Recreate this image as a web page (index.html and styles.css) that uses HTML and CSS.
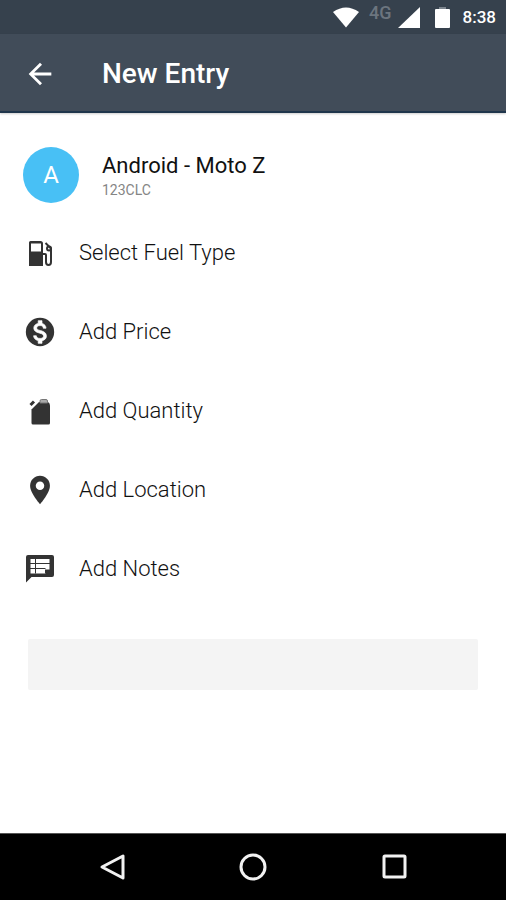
FILE: index.html
```html
<!DOCTYPE html>
<html lang="en">
<head>
<meta charset="utf-8">
<meta name="viewport" content="width=device-width, initial-scale=1">
<title>New Entry</title>
<link rel="stylesheet" href="styles.css">
</head>
<body>
<div class="status-bar">
  <svg class="status-icon wifi" viewBox="0 0 26 21" aria-hidden="true"><path d="M0 5Q13-4 26 5L13 20.500z"/></svg>
  <span class="network">4G</span>
  <svg class="status-icon signal" viewBox="0 0 22 21" aria-hidden="true"><path d="M22 0v21H0z"/></svg>
  <svg class="status-icon battery" viewBox="0 0 15 21" aria-hidden="true"><path class="battery-cap" d="M4 0h7v3H4z"/><path d="M1 2h13q1 0 1 1v17q0 1-1 1H1q-1 0-1-1V3q0-1 1-1z"/></svg>
  <time class="clock">8:38</time>
</div>
<header class="app-bar">
  <button class="icon-button" type="button" aria-label="Back">
    <svg class="icon" viewBox="0 0 24 24" aria-hidden="true"><path d="M20 11H7.830l5.590-5.590L12 4l-8 8 8 8 1.410-1.410L7.830 13H20z"/></svg>
  </button>
  <h1 class="title">New Entry</h1>
</header>
<main class="content">
  <section class="vehicle">
    <span class="avatar" aria-hidden="true">A</span>
    <div class="vehicle-text">
      <p class="vehicle-name">Android - Moto Z</p>
      <p class="vehicle-plate">123CLC</p>
    </div>
  </section>
  <ul class="fields">
    <li><button class="field" type="button">
      <svg class="icon" viewBox="0 0 34 34" aria-hidden="true"><path fill-rule="evenodd" d="M7.500 5h10Q20 5 20 7.500V30H6V6.500Q6 5 7.500 5zM8 7.500V15.500h10V7.500z"/><path class="stroke" d="M20 18h2q1 0 1 1v7q0 3 2.500 3t2.500-3V12.500L22.500 7"/><circle class="stroke" cx="26" cy="12.500" r="2"/></svg>
      Select Fuel Type</button></li>
    <li><button class="field" type="button">
      <svg class="icon" viewBox="0 0 24 24" aria-hidden="true"><circle cx="12" cy="12" r="10"/><path class="dollar" d="M13.410 18.090V20h-2.670v-1.930c-1.710-.36-3.160-1.460-3.270-3.400h1.960c.1 1.050.82 1.870 2.650 1.870 1.960 0 2.400-.98 2.400-1.590 0-.83-.44-1.610-2.670-2.140-2.480-.6-4.180-1.620-4.180-3.670 0-1.720 1.390-2.840 3.110-3.210V4h2.670v1.950c1.860.45 2.790 1.860 2.850 3.390H14.300c-.05-1.110-.64-1.870-2.220-1.870-1.500 0-2.400.68-2.400 1.640 0 .84.65 1.390 2.670 1.910s4.180 1.390 4.180 3.910c-.02 1.830-1.380 2.830-3.120 3.160z"/></svg>
      Add Price</button></li>
    <li><button class="field" type="button">
      <svg class="icon" viewBox="0 0 34 34" aria-hidden="true"><path d="M8.500 15.500 16 8h9Q27 9 27 11.500v17.500q0 1.500-1.500 1.500h-15.500Q8.500 30.500 8.500 29z"/><path class="stroke thick" d="M7.500 11l3.500-3.500"/><path class="handle" d="M17 9V7q0-1.500 1.500-1.500H23q1.500 0 1.500 1.500v2z"/></svg>
      Add Quantity</button></li>
    <li><button class="field" type="button">
      <svg class="icon" viewBox="0 0 24 24" aria-hidden="true"><path d="M12 2C8.130 2 5 5.130 5 9c0 5.250 7 13 7 13s7-7.750 7-13c0-3.870-3.130-7-7-7z"/><circle class="paper" cx="12" cy="9" r="3"/></svg>
      Add Location</button></li>
    <li><button class="field" type="button">
      <svg class="icon" viewBox="0 0 34 34" aria-hidden="true"><path d="M5 3h24q2 0 2 2v18q0 2-2 2H8.500L3 30.500V5q0-2 2-2z"/><path class="paper" d="M7.500 7h19v10.500l-4 4h-15z"/><path class="rule" d="M7 11.500h20M7 16.500h15.500M12.500 7v14.500"/><path d="M22 21.500v-4h5v4z"/></svg>
      Add Notes</button></li>
  </ul>
  <button class="save" type="submit" aria-label="Save" disabled></button>
</main>
<nav class="nav-bar" aria-label="System">
  <button class="nav-button" type="button" aria-label="Back"><svg class="nav-icon" viewBox="0 0 28 28" aria-hidden="true"><path d="M26 3v22L5 14z"/></svg></button>
  <button class="nav-button" type="button" aria-label="Home"><svg class="nav-icon" viewBox="0 0 28 28" aria-hidden="true"><circle cx="14" cy="14" r="12"/></svg></button>
  <button class="nav-button" type="button" aria-label="Recent apps"><svg class="nav-icon" viewBox="0 0 28 28" aria-hidden="true"><rect x="3" y="3" width="21" height="21" rx="1"/></svg></button>
</nav>
</body>
</html>
```
FILE: styles.css
```css
* {
  box-sizing: border-box;
}

body {
  display: flex;
  flex-direction: column;
  min-height: 100vh;
  margin: 0;
  background: #fff;
  color: #333;
  font-family: Roboto, "Liberation Sans", sans-serif;
}

h1,
p,
ul {
  margin: 0;
  padding: 0;
}

ul {
  list-style: none;
}

button {
  padding: 0;
  border: 0;
  background: none;
  color: inherit;
  font: inherit;
}

svg {
  display: block;
  flex: none;
  fill: currentColor;
}

.status-bar {
  display: flex;
  align-items: center;
  justify-content: flex-end;
  height: 34px;
  padding: 0 10px;
  background: #36414d;
  color: #fff;
}

.status-icon {
  height: 21px;
}

.wifi {
  width: 26px;
}

.network {
  align-self: flex-start;
  margin: 2px 6px 0 10px;
  color: #6c757f;
  font-size: 18px;
  font-weight: 500;
  line-height: 22px;
}

.signal {
  width: 22px;
}

.battery {
  width: 15px;
  margin: 0 13px 0 15px;
}

.battery-cap {
  fill: #7d858e;
}

.clock {
  font-size: 17px;
  font-weight: 500;
  line-height: 22px;
}

.app-bar {
  display: flex;
  align-items: center;
  gap: 45px;
  height: 79px;
  padding: 3px 23px 0;
  border-bottom: 2px solid #20364c;
  background: #414c59;
  color: #fff;
  box-shadow: 0 1px 2px rgba(0, 0, 0, 0.2);
}

.icon {
  width: 34px;
  height: 34px;
}

.title {
  font-size: 28px;
  font-weight: 500;
  line-height: 36px;
}

.content {
  flex: 1;
  padding: 34px 0;
}

.vehicle {
  display: flex;
  align-items: center;
  gap: 23px;
  padding: 0 23px;
}

.avatar {
  display: flex;
  flex: none;
  align-items: center;
  justify-content: center;
  width: 56px;
  height: 56px;
  border-radius: 50%;
  background: #48c0f5;
  color: #fff;
  font-size: 24px;
}

.vehicle-text {
  padding-top: 2px;
}

.vehicle-name {
  color: #111;
  font-size: 22px;
  line-height: 28px;
}

.vehicle-plate {
  color: #858585;
  font-size: 14px;
  line-height: 20px;
}

.fields {
  padding-top: 10px;
}

.field {
  display: flex;
  align-items: center;
  gap: 22px;
  width: 100%;
  height: 79px;
  padding: 0 23px;
  color: #111;
  font-size: 22px;
  font-weight: 300;
  line-height: 28px;
  text-align: left;
}

.field .icon {
  color: #333;
}

.stroke {
  fill: none;
  stroke: currentColor;
  stroke-width: 2;
}

.thick {
  stroke-width: 3;
}

.handle {
  fill: #aaa;
  stroke: #777;
}

.paper {
  fill: #fff;
}

.dollar {
  fill: #fff;
  stroke: #fff;
  stroke-width: 0.5;
}

.rule {
  fill: none;
  stroke: currentColor;
  stroke-width: 1;
}

.save {
  display: block;
  width: calc(100% - 56px);
  height: 51px;
  margin: 31px auto 0;
  border-radius: 2px;
  background: #f4f4f4;
}

.nav-bar {
  display: flex;
  justify-content: center;
  height: 67px;
  border-top: 1px solid #555;
  background: #000;
  color: #f2f2f2;
}

.nav-button {
  display: flex;
  flex: 0 1 28%;
  align-items: center;
  justify-content: center;
}

.nav-icon {
  width: 28px;
  height: 28px;
  fill: none;
  stroke: currentColor;
  stroke-width: 3;
  stroke-linejoin: round;
}
```
